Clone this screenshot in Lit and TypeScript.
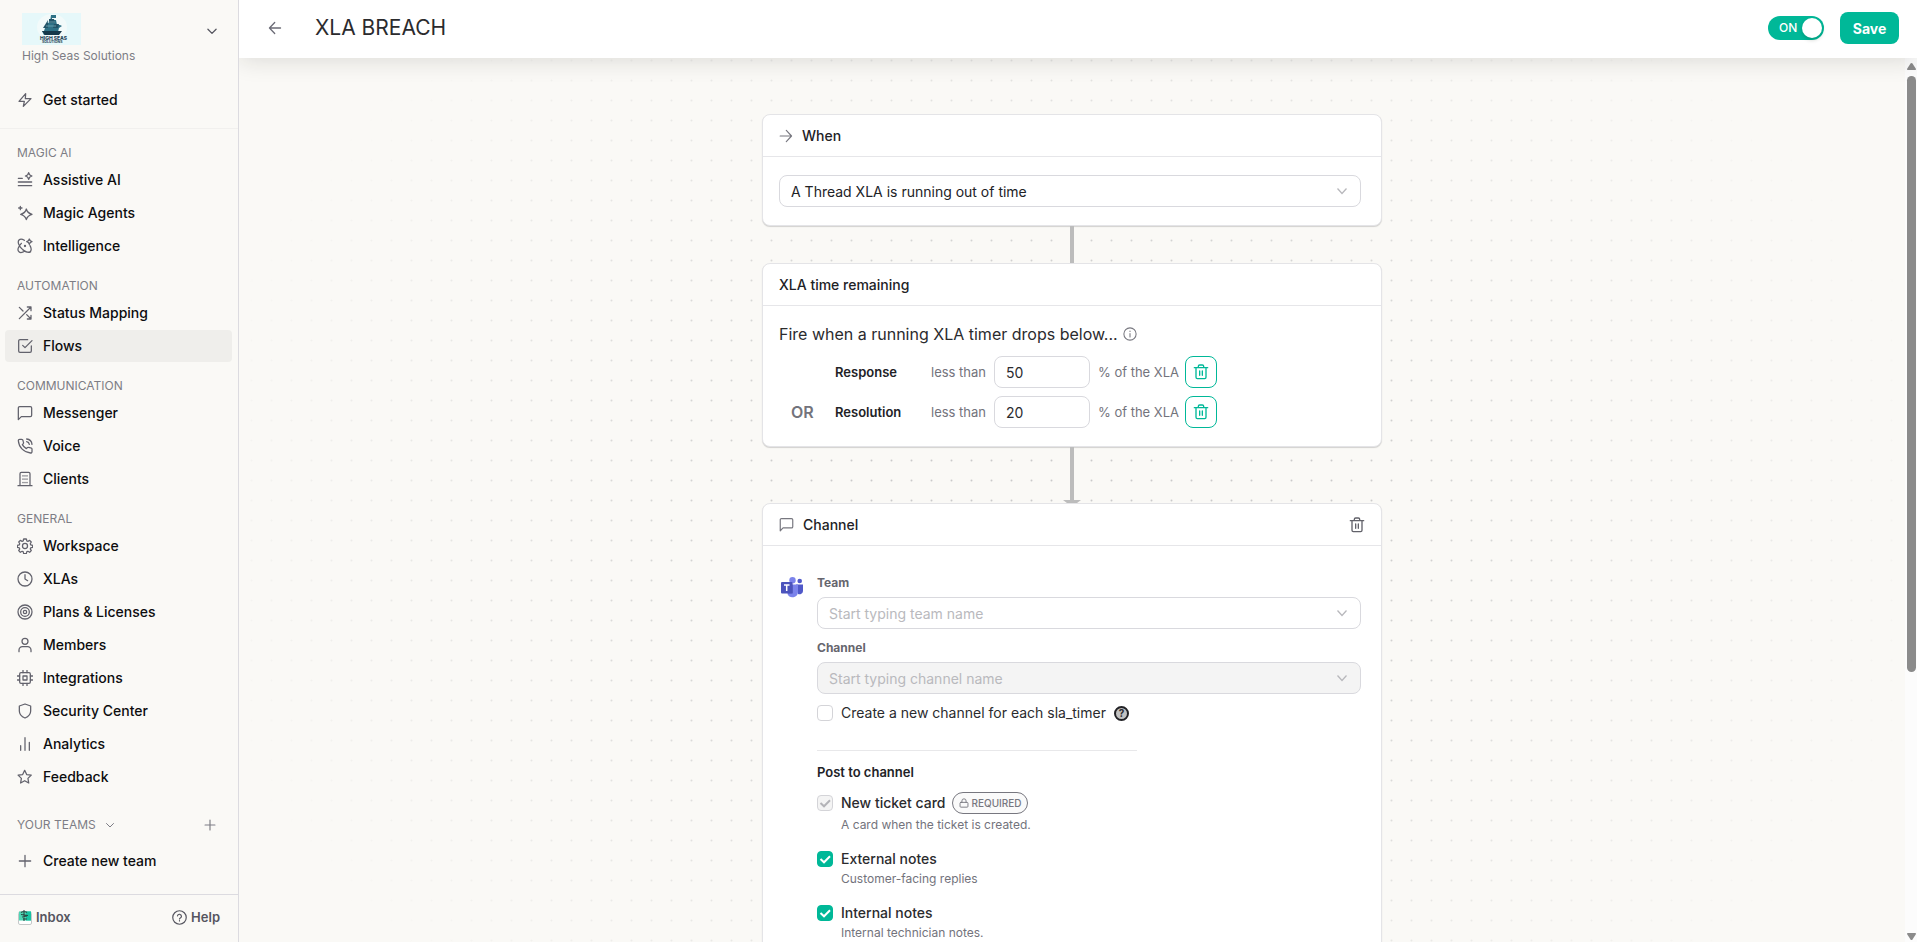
import { LitElement, html, css, svg, nothing } from "lit";
import { customElement, property, state } from "lit/decorators.js";

const ICONS: Record<string, unknown> = {
  bolt: svg`<path d="M13 2.5 3 14h8l-1.5 7.5L21 10h-8.5z"/>`,
  assist: svg`<path d="M2 9.5h6M2 15h20M2 20.5h20M17.500 1q.8 4.200 5 5-4.200.8-5 5-.8-4.200-5-5 4.200-.8 5-5z"/>`,
  sparkles: svg`<path d="M14 6q1.5 6 8.5 8-7 2-8.5 8-1.5-6-8.5-8 7-2 8.5-8zM5 2v5M2.500 4.500h5"/>`,
  orbit: svg`<path d="M11 3.500C8 1.500 4.500 1.500 3 3c-2.500 2.500-.5 8.500 4 13s10.500 6.500 13 4c1.500-1.500 1.500-5-.5-8.500M2.800 20.500c-2.500-2.500-.3-8 3.700-12.500M20.500 20.500c-2.500 2-7.500.5-11.500-2.500M3 20.700c1.800 1.700 5.500 1 9-1.200M18.500 1.500q.7 3.300 4 4-3.300.7-4 4-.7-3.300-4-4 3.300-.7 4-4z"/><circle cx="12" cy="12" r=".8"/>`,
  shuffle: svg`<path d="M15.500 3H21v5.500M3.500 20.500 21 3M21 15.500V21h-5.500M14.500 14.500 21 21M3.500 3.500l5.500 5.500"/>`,
  check: svg`<path d="M8.500 11l3.500 3.500L22.500 4M21.500 12v7.500a2 2 0 0 1-2 2h-15a2 2 0 0 1-2-2v-15a2 2 0 0 1 2-2H16"/>`,
  chat: svg`<path d="M22 15.500a2 2 0 0 1-2 2H6.500L2 22V4.500a2 2 0 0 1 2-2h16a2 2 0 0 1 2 2z"/>`,
  phone: svg`<path d="M22.500 17.500v3a2 2 0 0 1-2.200 2A19.800 19.800 0 0 1 2 4.200 2 2 0 0 1 4 2h3a2 2 0 0 1 2 1.700c.1 1 .4 1.900.7 2.800a2 2 0 0 1-.4 2.100L8 9.900a16 16 0 0 0 6 6l1.300-1.300a2 2 0 0 1 2.100-.4c.9.3 1.800.6 2.800.7a2 2 0 0 1 2.300 2.600zM14.500 5.500A5 5 0 0 1 18.500 9.500M14.500 1.500a9 9 0 0 1 8 8"/>`,
  building: svg`<path d="M1.500 22h21M4.500 22V4a2 2 0 0 1 2-2h11a2 2 0 0 1 2 2v18M9 7v.5M12 7v.5M15 7v.5M9 12v.5M12 12v.5M15 12v.5M9 17v.5M12 17v.5M15 17v.5"/>`,
  gear: svg`<circle cx="12" cy="12" r="3.8"/><path d="M10 1.500h4l.8 3 1.500.6L19 3.600 21.400 6l-1.500 2.700.6 1.500 3 .8v3l-3 .8-.6 1.500 1.500 2.700-2.400 2.400-2.700-1.500-1.500.6-.8 3h-4l-.8-3-1.500-.6L5 21.400 2.600 19l1.500-2.700-.6-1.500-3-.8v-3l3-.8.6-1.500L2.600 6 5 3.600l2.700 1.500 1.500-.6z"/>`,
  clock: svg`<circle cx="12" cy="12" r="10.5"/><path d="M12 5.500V12l4 2.500"/>`,
  target: svg`<circle cx="12" cy="12" r="10.5"/><circle cx="12" cy="12" r="6.5"/><circle cx="12" cy="12" r="2.5"/>`,
  user: svg`<circle cx="12" cy="6.5" r="4.5"/><path d="M3 22v-2.500a5 5 0 0 1 5-5h8a5 5 0 0 1 5 5V22"/>`,
  chip: svg`<rect x="4" y="4" width="16" height="16" rx="2"/><rect x="9" y="9" width="6" height="6"/><path d="M9 .5V4M15 .5V4M9 20v3.500M15 20v3.500M20 9h3.500M20 15h3.500M.5 9H4M.5 15H4"/>`,
  shield: svg`<path d="M12 1.500 20.500 4.500v7.500c0 5-3.500 8.500-8.500 10.500-5-2-8.500-5.500-8.500-10.500V4.500z"/>`,
  bars: svg`<path d="M5.500 21.500v-7M12 21.500v-19M18.500 21.500v-12"/>`,
  star: svg`<path d="m11.500 2 3 6.300 6.900.9-5 4.800 1.200 7-6.100-3.400L5.400 21l1.200-7-5-4.800 6.900-.9z"/>`,
  plus: svg`<path d="M12 3.500v17M3.500 12h17"/>`,
  down: svg`<path d="m5 9 7 7 7-7"/>`,
  left: svg`<path d="M21.500 12h-19M11.500 2.500 2.500 12l9 9.500"/>`,
  right: svg`<path d="M2 12h19M12.500 2.500 21.500 12l-9 9.500"/>`,
  help: svg`<circle cx="12" cy="12" r="10.8"/><path d="M8.800 9.300a3.200 3.200 0 0 1 6.300 1c0 2.100-3.100 2.500-3.100 4M12 17v.6"/>`,
  info: svg`<circle cx="12" cy="12" r="10.5"/><path d="M12 11v6M12 7v.6"/>`,
  trash: svg`<path d="M2 5.500h20M4.500 5.500V20a2 2 0 0 0 2 2h11a2 2 0 0 0 2-2V5.500M8 5.500v-2a2 2 0 0 1 2-2h4a2 2 0 0 1 2 2v2M10 10.500v6.500M14 10.500v6.500"/>`,
  lock: svg`<rect x="2.500" y="10.500" width="19" height="11.500" rx="2"/><path d="M7 10.500V7a5 5 0 0 1 10 0v3.500"/>`,
};

@customElement("ui-icon")
class UiIcon extends LitElement {
  @property() name = "";
  @property({ type: Number }) size = 16;
  @property({ type: Number }) stroke = 1.9;
  static styles = css`
    :host { display: inline-flex; flex: none; }
    svg { display: block; fill: none; stroke: currentColor; stroke-linecap: round; stroke-linejoin: round; }
  `;
  render() {
    return html`<svg width=${this.size} height=${this.size} viewBox="0 0 24 24" stroke-width=${this.stroke} aria-hidden="true">${ICONS[this.name]}</svg>`;
  }
}

const GROUPS: { title: string; items: [string, string][] }[] = [
  { title: "MAGIC AI", items: [["assist", "Assistive AI"], ["sparkles", "Magic Agents"], ["orbit", "Intelligence"]] },
  { title: "AUTOMATION", items: [["shuffle", "Status Mapping"], ["check", "Flows"]] },
  { title: "COMMUNICATION", items: [["chat", "Messenger"], ["phone", "Voice"], ["building", "Clients"]] },
  {
    title: "GENERAL",
    items: [
      ["gear", "Workspace"], ["clock", "XLAs"], ["target", "Plans & Licenses"], ["user", "Members"],
      ["chip", "Integrations"], ["shield", "Security Center"], ["bars", "Analytics"], ["star", "Feedback"],
    ],
  },
];

@customElement("side-nav")
class SideNav extends LitElement {
  @property() active = "Flows";
  static styles = css`
    * { box-sizing: border-box; }
    :host {
      display: flex; flex-direction: column; box-sizing: border-box; width: 239px; height: 100%;
      background: #faf9f6; border-right: 1px solid #dcdbe0; color: #111; overflow: hidden;
    }
    button { font: inherit; color: inherit; background: none; border: 0; padding: 0; cursor: pointer; }
    .brand { display: flex; justify-content: space-between; align-items: flex-start; padding: 13px 19px 0 22px; color: #55555f; text-align: left; }
    .brand ui-icon { padding-top: 11px; }
    .mark { display: block; }
    .org { display: block; margin-top: 2px; font-size: 12px; line-height: 18px; color: #7d7d85; }
    .scroll { flex: 1; min-height: 0; overflow: hidden; }
    .start { padding: 19px 5px 12px; border-bottom: 1px solid #f1f0ee; }
    .item {
      display: flex; align-items: center; gap: 10px; height: 32px; padding: 0 12px; border-radius: 4px;
      font-size: 14px; font-weight: 500; line-height: 20px; color: #0d0d0f; text-decoration: none;
    }
    .item ui-icon { color: #62626c; }
    .item.on { background: #efeeeb; }
    .group { padding: 16px 6px 0 5px; }
    .title { margin: 0 0 3px; padding-left: 12px; font-size: 12px; font-weight: 400; line-height: 16px; color: #7d7d85; }
    .list { display: flex; flex-direction: column; gap: 1px; }
    .teams { padding: 24px 6px 0 5px; }
    .teams-head { display: flex; align-items: center; margin-bottom: 12px; padding: 0 15px 0 12px; font-size: 12px; line-height: 16px; color: #7d7d85; }
    .teams-head .toggle { display: flex; align-items: center; gap: 8px; }
    .teams-head .add { margin-left: auto; display: flex; }
    .foot { display: flex; justify-content: space-between; align-items: center; height: 48px; padding: 0 18px 3px 18px; border-top: 1px solid #dcdbe0; }
    .foot a { display: flex; align-items: center; gap: 4px; font-size: 13px; font-weight: 600; line-height: 20px; color: #55555f; text-decoration: none; }
    .inbox { display: block; }
  `;
  item(icon: string, label: string) {
    return html`<a class="item ${label === this.active ? "on" : ""}" href="#" aria-current=${label === this.active ? "page" : nothing}>
      <ui-icon name=${icon}></ui-icon>${label}</a>`;
  }
  render() {
    return html`
      <button class="brand" aria-label="Switch workspace">
        <span>
          <svg class="mark" width="59" height="32" viewBox="0 0 59 32" aria-hidden="true">
            <rect width="59" height="32" fill="#e6f8fa" />
            <ellipse cx="30" cy="14" rx="15" ry="13" fill="#f2fafa" />
            <path d="M29 2h5v3h-4v2h4l1 5h3l2 1-3 2-1 4 2 1-3 2H22l-2-4h2l2-6 2-2 2-1z" fill="#2e7186" />
            <path d="M21 15l5-8v8zM27 6h5l1 4h-6zM32 11h5l-1 4h-5z" fill="#235468" />
            <path d="M20 18h20l-3 4H23z" fill="#16384a" />
            <path d="M24 13h10M25 9h8" stroke="#8fc2cf" stroke-width=".6" />
            <text x="18" y="26.5" font-size="5" font-weight="800" fill="#1f4356">HIGH SEAS</text>
            <text x="20" y="30" font-size="3.5" font-weight="700" fill="#1f4356">SOLUTIONS</text>
          </svg>
          <span class="org">High Seas Solutions</span>
        </span>
        <ui-icon name="down" size="14" stroke="2.2"></ui-icon>
      </button>
      <nav class="scroll">
        <div class="start">${this.item("bolt", "Get started")}</div>
        ${GROUPS.map((g) => html`<section class="group">
          <h2 class="title">${g.title}</h2>
          <div class="list">${g.items.map(([i, l]) => this.item(i, l))}</div>
        </section>`)}
        <section class="teams">
          <div class="teams-head">
            <button class="toggle">YOUR TEAMS<ui-icon name="down" size="12" stroke="2"></ui-icon></button>
            <button class="add" aria-label="Add team"><ui-icon name="plus" size="14" stroke="2"></ui-icon></button>
          </div>
          ${this.item("plus", "Create new team")}
        </section>
      </nav>
      <footer class="foot">
        <a href="#">
          <svg class="inbox" width="14" height="16" viewBox="0 0 14 16" aria-hidden="true">
            <rect x=".5" y="3" width="13" height="12.5" rx="1.5" fill="#fff" stroke="#c4c8c8" />
            <rect x="1" y="2.5" width="12" height="9" fill="#4fd6b4" />
            <path d="M8 2.500h5v9H8z" fill="#17c3a2" />
            <path d="M3 3.500q3-2 6 0M3 5.500l7 1M6 1v11M4 8l5-1M5 10h4" stroke="#2a4a45" stroke-width="1.1" fill="none" />
          </svg>Inbox</a>
        <a href="#"><ui-icon name="help" size="15" stroke="1.9"></ui-icon>Help</a>
      </footer>`;
  }
}

@customElement("top-bar")
class TopBar extends LitElement {
  @state() on = true;
  static styles = css`
    * { box-sizing: border-box; }
    :host {
      display: flex; align-items: center; box-sizing: border-box; height: 58px; padding: 0 18px 2px 29px;
      position: relative; z-index: 1; background: #fff; box-shadow: 0 2px 24px rgba(30, 28, 20, 0.14);
    }
    button { font: inherit; border: 0; cursor: pointer; }
    .back { display: flex; padding: 0; background: none; color: #6b6b76; }
    h1 { flex: 1; margin: 0 0 0 33px; font-size: 21px; font-weight: 400; line-height: 32px; color: #2b2b2e; }
    .switch { position: relative; display: flex; margin-right: 16px; cursor: pointer; }
    .switch input { appearance: none; width: 56px; height: 24px; margin: 0; border-radius: 12px; background: #b5b5bb; cursor: pointer; }
    .switch input:checked { background: #00b898; }
    .word { position: absolute; left: 11px; top: 4px; font-size: 12px; font-weight: 500; line-height: 16px; color: #fff; }
    .knob { position: absolute; right: 2px; top: 2px; width: 20px; height: 20px; border-radius: 50%; background: #fff; box-shadow: 0 2px 4px rgba(0, 35, 11, 0.2); }
    .save { height: 32px; min-width: 59px; padding: 0 12px; border-radius: 8px; background: #00b898; color: #fff; font-size: 14px; font-weight: 700; }
  `;
  render() {
    return html`
      <button class="back" aria-label="Back"><ui-icon name="left" size="14" stroke="2.2"></ui-icon></button>
      <h1>XLA BREACH</h1>
      <label class="switch">
        <input type="checkbox" role="switch" aria-label="Flow enabled" .checked=${this.on}
          @change=${(e: Event) => (this.on = (e.target as HTMLInputElement).checked)} />
        <span class="word">${this.on ? "ON" : ""}</span><span class="knob"></span>
      </label>
      <button class="save">Save</button>`;
  }
}

const POSTS = [
  { label: "New ticket card", note: "A card when the ticket is created.", required: true },
  { label: "External notes", note: "Customer-facing replies", required: false },
  { label: "Internal notes", note: "Internal technician notes.", required: false },
];

@customElement("flow-canvas")
class FlowCanvas extends LitElement {
  static styles = css`
    * { box-sizing: border-box; }
    :host { display: flex; flex: 1; min-height: 0; background: #faf9f6; }
    .view {
      flex: 1; min-width: 0; overflow-y: auto; scrollbar-width: none; position: relative;
      display: flex; flex-direction: column; align-items: center; padding: 56px 20px 24px;
    }
    .dots {
      position: absolute; inset: 0;
      background: url("data:image/svg+xml,%3Csvg xmlns='http://www.w3.org/2000/svg' width='20' height='20'%3E%3Ccircle cx='10.5' cy='10.5' r='1' fill='%23cacaca'/%3E%3C/svg%3E") 2px -8px;
      mask-image: radial-gradient(ellipse 54% 74% at 50% 52%, #000 30%, transparent 100%);
    }
    .card {
      position: relative; flex: none; width: 100%; max-width: 620px; border: 1px solid #e4e4e7; border-radius: 8px;
      background: #fff; box-shadow: 0 1px 1px rgba(0, 0, 0, 0.16); color: #222226;
    }
    .head { display: flex; align-items: center; gap: 9px; height: 42px; padding: 0 16px; border-bottom: 1px solid #e6e6e9; }
    .head h2 { margin: 0; font-size: 14px; font-weight: 500; line-height: 20px; }
    .head ui-icon { color: #77777f; }
    .head .remove { display: flex; margin-left: auto; padding: 0; border: 0; background: none; cursor: pointer; }
    .head .remove ui-icon { color: #62626a; }
    .body { padding: 18px 20px 18px 16px; }
    .timer { padding-top: 17px; }
    .line { position: relative; flex: none; width: 4px; background: #bcbcbc; }
    .short { height: 37px; }
    .long { height: 56px; }
    .tip { position: absolute; left: -7px; bottom: 0; width: 18px; height: 3px; background: #bcbcbc; clip-path: polygon(0 0, 100% 0, 78% 100%, 22% 100%); }
    select {
      appearance: none; display: block; width: 100%; height: 32px; padding: 0 36px 0 11px; border: 1px solid #d9d9de; border-radius: 8px;
      font: inherit; font-size: 14px; color: #222226; opacity: 1;
      background: #fff url("data:image/svg+xml,%3Csvg xmlns='http://www.w3.org/2000/svg' width='12' height='12' fill='none' stroke='%23b8b8bc' stroke-width='1.3'%3E%3Cpath d='M1.500 3.500 6 8.500l4.500-5'/%3E%3C/svg%3E") no-repeat right 12px center;
    }
    select.empty { color: #b9b9bd; }
    select:disabled { background-color: #f4f4f4; }
    .lead { display: flex; align-items: center; gap: 5px; margin: 0; font-size: 16px; font-weight: 400; line-height: 22px; color: #2b2b2e; }
    .lead ui-icon { color: #77777f; }
    .rules { display: flex; flex-direction: column; gap: 8px; margin-top: 11px; }
    .rule {
      display: grid; grid-template-columns: 48px 88px 55px 96px 79px 32px; justify-content: start; align-items: center; column-gap: 8px;
      font-size: 13px; line-height: 20px; white-space: nowrap; color: #73737c;
    }
    .or { padding-left: 12px; font-size: 16px; font-weight: 600; }
    .name { font-weight: 600; color: #222226; }
    .rule input { width: 96px; height: 32px; padding: 0 11px; border: 1px solid #d9d9de; border-radius: 8px; font: inherit; font-size: 14px; color: #2b2b2e; background: #fff; }
    .del { display: flex; align-items: center; justify-content: center; width: 32px; height: 32px; padding: 0; border: 1px solid #00b898; border-radius: 8px; background: #fff; color: #00b898; cursor: pointer; }
    .channel { display: flex; gap: 14px; padding: 27px 20px 24px 18px; }
    .teams-logo { display: block; flex: none; margin-top: 4px; }
    .form { flex: 1; min-width: 0; }
    .field { display: block; margin-bottom: 4px; font-size: 12px; font-weight: 700; line-height: 20px; color: #66666e; }
    .second { margin-top: 9px; }
    input[type="checkbox"] { appearance: none; flex: none; width: 16px; height: 16px; margin: 0; border: 1px solid #d4d4d8; border-radius: 4px; background: #fff; }
    input[type="checkbox"]:checked {
      border-color: #00b898;
      background: #00b898 url("data:image/svg+xml,%3Csvg xmlns='http://www.w3.org/2000/svg' width='14' height='14' fill='none' stroke='white' stroke-width='2'%3E%3Cpath d='M2.500 7 6 10.300l6-6'/%3E%3C/svg%3E") center no-repeat;
    }
    input[type="checkbox"]:disabled {
      border-color: #d4d4d8;
      background: #f4f4f4 url("data:image/svg+xml,%3Csvg xmlns='http://www.w3.org/2000/svg' width='14' height='14' fill='none' stroke='%23b4b4b8' stroke-width='2'%3E%3Cpath d='M2.500 7 6 10.300l6-6'/%3E%3C/svg%3E") center no-repeat;
    }
    .tick { display: flex; align-items: center; gap: 8px; font-size: 14px; line-height: 22px; color: #2b2b2e; }
    .create { margin-top: 8px; }
    .q { display: flex; align-items: center; justify-content: center; width: 15px; height: 15px; border: 2px solid #222226; border-radius: 50%; background: #c2c2c2; font-size: 10px; font-weight: 700; line-height: 10px; }
    hr { width: 320px; max-width: 100%; margin: 26px 0 11px; border: 0; border-top: 1px solid #e8e8ea; }
    h3 { margin: 0 0 8px; font-size: 13px; font-weight: 600; line-height: 20px; color: #222226; }
    .post { margin-bottom: 14px; }
    .post .tick { font-weight: 500; }
    .post .locked { height: 26px; }
    .note { margin: 0 0 0 24px; font-size: 12px; line-height: 18px; color: #73737c; }
    .badge { display: flex; align-items: center; gap: 3px; height: 22px; margin-left: -2px; padding: 0 5px 0 6px; border: 1px solid #77777f; border-radius: 11px; background: #fafafa; font-size: 10px; font-weight: 500; color: #77777f; }
    .bar { flex: none; width: 12px; display: flex; flex-direction: column; align-items: center; gap: 6px; padding: 5px 0 2px; background: #fcfcfc; }
    .arrow { display: block; fill: #8b8b8b; }
    .track { flex: 1; width: 9px; }
    .thumb { width: 9px; height: 70%; border-radius: 5px; background: #8b8b8b; }
  `;
  rule(or: string, name: string, value: string) {
    return html`<div class="rule">
      <span class="or">${or}</span><span class="name">${name}</span>
      <label for=${name}>less than</label><input id=${name} type="text" inputmode="numeric" .value=${value} />
      <span>% of the XLA</span>
      <button class="del" aria-label="Remove ${name}"><ui-icon name="trash" size="16" stroke="2"></ui-icon></button>
    </div>`;
  }
  render() {
    return html`
      <div class="view">
        <div class="dots"></div>
        <section class="card">
          <header class="head"><ui-icon name="right" size="14" stroke="2"></ui-icon><h2>When</h2></header>
          <div class="body"><select aria-label="Trigger"><option>A Thread XLA is running out of time</option></select></div>
        </section>
        <div class="line short"></div>
        <section class="card">
          <header class="head"><h2>XLA time remaining</h2></header>
          <div class="body timer">
            <p class="lead">Fire when a running XLA timer drops below... <ui-icon name="info" size="14" stroke="1.8"></ui-icon></p>
            <div class="rules">${this.rule("", "Response", "50")}${this.rule("OR", "Resolution", "20")}</div>
          </div>
        </section>
        <div class="line long"><span class="tip"></span></div>
        <section class="card">
          <header class="head">
            <ui-icon name="chat" size="15" stroke="1.9"></ui-icon><h2>Channel</h2>
            <button class="remove" aria-label="Remove channel step"><ui-icon name="trash" size="16" stroke="2"></ui-icon></button>
          </header>
          <div class="channel">
            <svg class="teams-logo" width="22" height="21" viewBox="0 0 22 21" aria-hidden="true">
              <circle cx="18.7" cy="4" r="2.3" fill="#5059c9" />
              <path d="M15 7.500h7v6.500a3.500 3.500 0 0 1-5 3z" fill="#5059c9" />
              <circle cx="11.5" cy="3.2" r="3.2" fill="#7b83eb" />
              <path d="M7 7.500h10v7.500a5.500 5.500 0 0 1-10.500 2z" fill="#7b83eb" />
              <path d="M7 7.500h5v9H7z" fill="#4e55b8" opacity=".6" />
              <rect y="5" width="11.5" height="11.5" rx="1" fill="#4b53bc" />
              <path d="M3 8h5.500M5.700 8v6" stroke="#fff" stroke-width="1.5" />
            </svg>
            <div class="form">
              <label class="field" for="team">Team</label>
              <select class="empty" id="team"><option>Start typing team name</option></select>
              <label class="field second" for="channel">Channel</label>
              <select class="empty" id="channel" disabled><option>Start typing channel name</option></select>
              <label class="tick create"><input type="checkbox" />Create a new channel for each sla_timer<span class="q">?</span></label>
              <hr />
              <h3>Post to channel</h3>
              ${POSTS.map((p) => html`<div class="post">
                <label class="tick ${p.required ? "locked" : ""}"><input type="checkbox" checked ?disabled=${p.required} />${p.label}
                  ${p.required ? html`<span class="badge"><ui-icon name="lock" size="10" stroke="2.2"></ui-icon>REQUIRED</span>` : nothing}</label>
                <p class="note">${p.note}</p>
              </div>`)}
            </div>
          </div>
        </section>
      </div>
      <div class="bar" aria-hidden="true">
        <svg class="arrow" width="9" height="7" viewBox="0 0 9 7"><path d="M4.500 0q.6 0 1 .6L9 6q.2 1-.8 1H.8Q-.2 7 0 6L3.500.6q.4-.6 1-.6z" /></svg>
        <div class="track"><div class="thumb"></div></div>
        <svg class="arrow" width="9" height="7" viewBox="0 0 9 7"><path d="M4.500 7q.6 0 1-.6L9 1q.2-1-.8-1H.8Q-.2 0 0 1l3.500 5.400q.4.6 1 .6z" /></svg>
      </div>`;
  }
}

@customElement("app-root")
class AppRoot extends LitElement {
  static styles = css`
    :host { display: flex; height: 100vh; overflow: hidden; font-family: Inter, "Liberation Sans", sans-serif; background: #faf9f6; }
    side-nav { flex: none; }
    main { flex: 1; min-width: 0; display: flex; flex-direction: column; overflow: hidden; }
  `;
  render() {
    return html`<side-nav></side-nav><main><top-bar></top-bar><flow-canvas></flow-canvas></main>`;
  }
}
